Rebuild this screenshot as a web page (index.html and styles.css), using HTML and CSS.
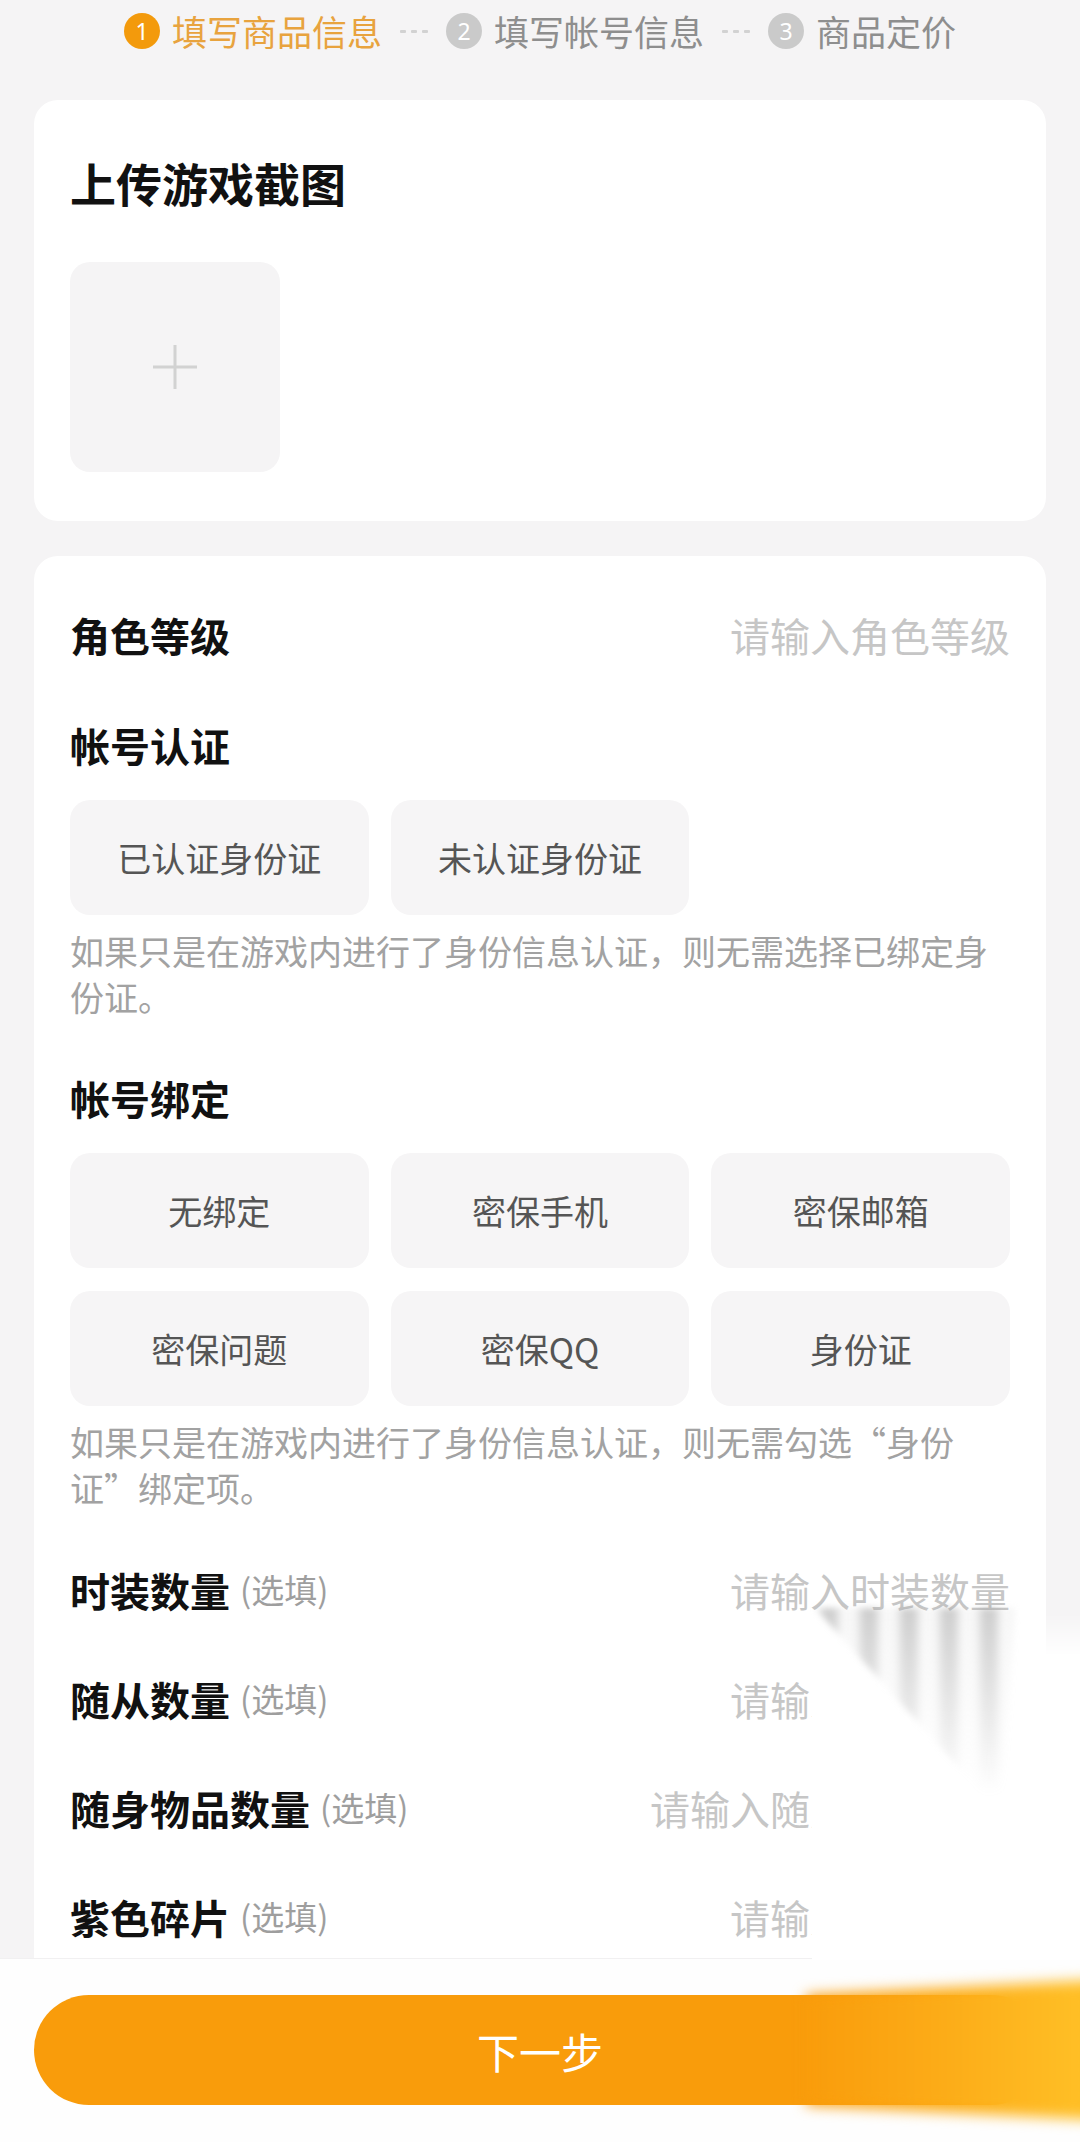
FILE: index.html
```html
<!DOCTYPE html>
<html lang="zh-CN">
<head>
<meta charset="utf-8">
<title>填写商品信息</title>
<link rel="stylesheet" href="styles.css">
</head>
<body>
<div class="page">
  <header class="steps">
    <div class="step active"><span class="num">1</span><span class="step-label">填写商品信息</span></div>
    <div class="dash"><i></i><i></i><i></i></div>
    <div class="step"><span class="num">2</span><span class="step-label">填写帐号信息</span></div>
    <div class="dash"><i></i><i></i><i></i></div>
    <div class="step"><span class="num">3</span><span class="step-label">商品定价</span></div>
  </header>

  <main class="content">
    <section class="card upload-card">
      <h2 class="card-title">上传游戏截图</h2>
      <div class="upload-box">
        <svg width="48" height="48" viewBox="0 0 48 48"><path d="M24 2V46M2 24H46" stroke="#D2D2D2" stroke-width="3" fill="none"/></svg>
      </div>
    </section>

    <section class="card form-card">
      <div class="field-row">
        <span class="label">角色等级</span>
        <span class="placeholder">请输入角色等级</span>
      </div>

      <div class="section-label">帐号认证</div>
      <div class="options">
        <div class="opt">已认证身份证</div>
        <div class="opt">未认证身份证</div>
      </div>
      <p class="hint">如果只是在游戏内进行了身份信息认证，则无需选择已绑定身<br>份证。</p>

      <div class="section-label">帐号绑定</div>
      <div class="options">
        <div class="opt">无绑定</div>
        <div class="opt">密保手机</div>
        <div class="opt">密保邮箱</div>
        <div class="opt">密保问题</div>
        <div class="opt">密保QQ</div>
        <div class="opt">身份证</div>
      </div>
      <p class="hint">如果只是在游戏内进行了身份信息认证，则无需勾选“身份<br>证”绑定项。</p>

      <div class="opt-rows">
        <div class="field-row small">
          <span class="label">时装数量<span class="optional">(选填)</span></span>
          <span class="placeholder">请输入时装数量</span>
        </div>
        <div class="field-row small">
          <span class="label">随从数量<span class="optional">(选填)</span></span>
          <span class="placeholder">请输入随从数量</span>
        </div>
        <div class="field-row small">
          <span class="label">随身物品数量<span class="optional">(选填)</span></span>
          <span class="placeholder">请输入随身物品数量</span>
        </div>
        <div class="field-row small">
          <span class="label">紫色碎片<span class="optional">(选填)</span></span>
          <span class="placeholder">请输入紫色碎片</span>
        </div>
      </div>
    </section>
  </main>

  <footer class="footer">
    <button class="next">下一步</button>
  </footer>

  <div class="glitch-cover"></div>
  <div class="glitch-smear"><div class="smear-shape"></div></div>
  <div class="glitch-btn"><div class="btn-shape"></div></div>
</div>
</body>
</html>
```

FILE: styles.css
```css
* {
  box-sizing: border-box;
  margin: 0;
  padding: 0;
}

html, body {
  width: 1080px;
  height: 2142px;
  overflow: hidden;
}

body {
  background: #F5F4F5;
  font-family: "Noto Sans CJK SC", "Noto Sans", sans-serif;
  color: #111;
}

.page {
  position: relative;
  height: 2142px;
  display: flex;
  flex-direction: column;
}

/* steps */
.steps {
  height: 100px;
  flex-shrink: 0;
  display: flex;
  justify-content: center;
  align-items: flex-start;
  padding-top: 12px;
}

.step {
  display: flex;
  align-items: center;
  gap: 12px;
  height: 38px;
}

.num {
  width: 36px;
  height: 36px;
  border-radius: 50%;
  background: #CACACA;
  color: #fff;
  font-family: "Noto Sans", sans-serif;
  font-size: 23px;
  line-height: 36px;
  text-align: center;
}

.step-label {
  font-size: 35px;
  line-height: 38px;
  color: #8E8E8E;
}

.step.active .num {
  background: #F39A0C;
}

.step.active .step-label {
  color: #E8A33E;
}

.dash {
  display: flex;
  align-items: center;
  gap: 5px;
  height: 38px;
  margin: 0 18px;
}

.dash i {
  width: 6px;
  height: 3px;
  border-radius: 1px;
  background: #D2D2D2;
}

/* content */
.content {
  flex: 1;
  overflow: hidden;
  padding: 0 34px;
  display: flex;
  flex-direction: column;
  gap: 35px;
}

.card {
  background: #FFFFFF;
  border-radius: 24px;
  padding: 0 36px;
  flex-shrink: 0;
}

.upload-card {
  padding-top: 50px;
  padding-bottom: 49px;
}

.card-title {
  font-size: 46px;
  line-height: 64px;
  font-weight: 700;
  color: #111;
}

.upload-box {
  margin-top: 48px;
  width: 210px;
  height: 210px;
  border-radius: 20px;
  background: #F5F4F5;
  display: flex;
  align-items: center;
  justify-content: center;
}

.form-card {
  padding-top: 24px;
  padding-bottom: 40px;
}

.field-row {
  height: 110px;
  display: flex;
  align-items: center;
  justify-content: space-between;
}

.field-row.small {
  height: 109px;
}

.opt-rows {
  margin-top: 24px;
}

.label {
  font-size: 40px;
  line-height: 1;
  font-weight: 700;
  color: #111;
  display: flex;
  align-items: center;
}

.optional {
  font-size: 33px;
  font-weight: 400;
  color: #9E9E9E;
  margin-left: 10px;
}

.placeholder {
  font-size: 40px;
  line-height: 1;
  color: #C6C6C6;
}

.section-label {
  height: 110px;
  display: flex;
  align-items: center;
  font-size: 40px;
  font-weight: 700;
  color: #111;
}

.hint + .section-label {
  margin-top: 23px;
}

.options {
  display: grid;
  grid-template-columns: repeat(3, 1fr);
  column-gap: 22px;
  row-gap: 23px;
}

.opt {
  height: 115px;
  border-radius: 20px;
  background: #F6F5F6;
  display: flex;
  align-items: center;
  justify-content: center;
  font-size: 34px;
  color: #555;
}

.hint {
  margin-top: 13px;
  font-size: 34px;
  line-height: 46px;
  color: #A2A2A2;
}

/* footer */
.footer {
  height: 183px;
  flex-shrink: 0;
  background: #FEFEFE;
  padding: 36px 34px 0;
  box-shadow: 0 -1px 0 #F1F0F1;
}

.next {
  width: 100%;
  height: 110px;
  border: none;
  border-radius: 55px;
  background: #F99C0B;
  color: #FFFFFF;
  font-family: "Noto Sans CJK SC", "Noto Sans", sans-serif;
  font-size: 42px;
}

/* screen-capture smear artefacts lying over the page */
.glitch-cover {
  position: absolute;
  left: 812px;
  top: 1612px;
  width: 268px;
  height: 348px;
  background: #FFFFFF;
  -webkit-mask-image: linear-gradient(to bottom, transparent 0, #000 46px);
  mask-image: linear-gradient(to bottom, transparent 0, #000 46px);
}

.glitch-smear {
  position: absolute;
  left: 815px;
  top: 1608px;
  width: 200px;
  height: 186px;
  filter: blur(3px);
}

.smear-shape {
  width: 100%;
  height: 100%;
  clip-path: polygon(0 0, 100% 0, 94% 100%, 84% 100%);
  background: repeating-linear-gradient(90deg,
    rgba(190,190,190,0.15) 0px,
    rgba(165,165,165,0.55) 10px,
    rgba(165,165,165,0.55) 18px,
    rgba(200,200,200,0.12) 28px,
    rgba(190,190,190,0.15) 40px);
  -webkit-mask-image: linear-gradient(to bottom, #000 0%, rgba(0,0,0,0.55) 45%, transparent 100%);
  mask-image: linear-gradient(to bottom, #000 0%, rgba(0,0,0,0.55) 45%, transparent 100%);
}

.glitch-btn {
  position: absolute;
  left: 806px;
  top: 1976px;
  width: 290px;
  height: 148px;
  filter: blur(7px);
}

.btn-shape {
  width: 100%;
  height: 100%;
  clip-path: polygon(0 19px, 100% 4px, 100% 144px, 0 129px);
  background: linear-gradient(90deg, #F99C0B 0%, #FCAB17 45%, #FFC127 100%);
}
```
